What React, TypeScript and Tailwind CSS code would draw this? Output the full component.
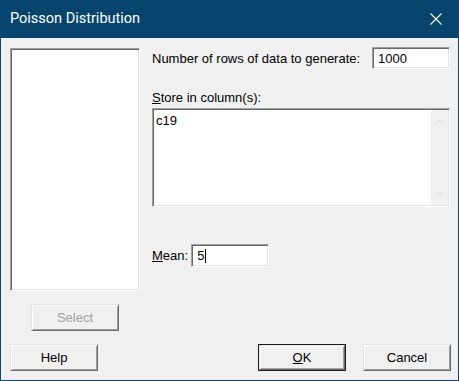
import React from 'react';
import { ChevronUp, ChevronDown } from 'lucide-react';

const sunken =
  'border border-t-[#a0a0a0] border-l-[#a0a0a0] border-b-white border-r-white shadow-[inset_1px_1px_0_#696969,inset_-1px_-1px_0_#e3e3e3] bg-white';

const raised =
  'border border-t-[#e3e3e3] border-l-[#e3e3e3] border-b-[#696969] border-r-[#696969] shadow-[inset_1px_1px_0_#ffffff,inset_-1px_-1px_0_#a0a0a0] bg-[#f0f0f0]';

function Btn({ children, disabled, def }: { children: React.ReactNode; disabled?: boolean; def?: boolean }) {
  const inner = (
    <div
      className={`${raised} flex items-center justify-center w-full h-full ${
        disabled ? 'text-[#a0a0a0]' : 'text-black'
      }`}
    >
      {children}
    </div>
  );
  if (def) {
    return <div className="w-[88px] h-[27px] border border-[#1e1e1e]">{inner}</div>;
  }
  return <div className="w-[88px] h-[27px]">{inner}</div>;
}

export default function App() {
  return (
    <div
      className="w-[459px] h-[381px] flex flex-col bg-[#f0f0f0] border-x border-b border-[#07446e] text-[13px] leading-none"
      style={{ fontFamily: '"Liberation Sans", Arial, sans-serif' }}
    >
      {/* Title bar */}
      <div className="h-[38px] -mx-px bg-[#07446e] flex items-center justify-between pl-[10px] pr-[16px] text-white">
        <span className="text-[14.5px]" style={{ fontFamily: 'Roboto, sans-serif' }}>
          Poisson Distribution
        </span>
        <svg width="12" height="12" viewBox="0 0 12 12" className="mr-px">
          <path d="M0.5 0.5L11.5 11.5M11.5 0.5L0.5 11.5" stroke="white" strokeWidth="1.1" fill="none" />
        </svg>
      </div>

      <div className="flex-1 flex flex-col pl-[9px] pr-[7px]">
        <div className="flex gap-[12px]">
          {/* Variable list */}
          <div className="flex flex-col pt-[10px]">
            <div className={`${sunken} w-[130px] h-[243px]`} />
            <div className="mt-[13px] ml-[21px]">
              <Btn disabled>Select</Btn>
            </div>
          </div>

          {/* Options */}
          <div className="w-[298px] flex flex-col pt-[9px]">
            <div className="flex items-center justify-between h-[22px]">
              <span>
                Number of rows of data to <span className="underline">g</span>enerate:
              </span>
              <div className={`${sunken} w-[78px] h-[22px] flex items-center pl-[5px]`}>1000</div>
            </div>

            <div className="mt-[20px] h-[16px] flex items-center">
              <span>
                <span className="underline">S</span>tore in column(s):
              </span>
            </div>
            <div className={`${sunken} mt-[3px] h-[99px] flex`}>
              <div className="flex-1 pl-[3px] pt-[5px]">c19</div>
              <div className="w-[17px] my-px mr-px bg-[#f0f0f0] flex flex-col items-center justify-between py-[6px] text-[#c8c8c8]">
                <ChevronUp className="w-[11px] h-[11px]" strokeWidth={1.6} />
                <ChevronDown className="w-[11px] h-[11px]" strokeWidth={1.6} />
              </div>
            </div>

            <div className="mt-[37px] flex items-center gap-[3px]">
              <span>
                <span className="underline">M</span>ean:
              </span>
              <div className={`${sunken} w-[78px] h-[23px] flex items-center pl-[5px]`}>
                5<span className="w-px h-[14px] bg-black ml-px" />
              </div>
            </div>
          </div>
        </div>

        {/* Bottom buttons */}
        <div className="mt-[13px] flex items-center">
          <Btn>Help</Btn>
          <div className="ml-auto flex gap-[17px]">
            <Btn def>
              <span className="underline">O</span>K
            </Btn>
            <Btn>Cancel</Btn>
          </div>
        </div>
      </div>
    </div>
  );
}
